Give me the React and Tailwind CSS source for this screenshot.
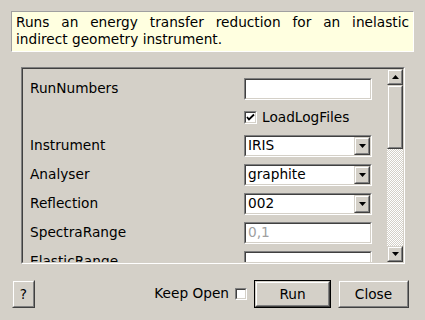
import React from "react";

const Sunken = ({ className = "", inner = "", children }) => (
  <div className={"border border-t-[#808080] border-l-[#808080] border-r-white border-b-white " + className}>
    <div className={"h-full w-full border border-t-[#404040] border-l-[#404040] border-r-[#d4d0c8] border-b-[#d4d0c8] " + inner}>
      {children}
    </div>
  </div>
);

const Raised = ({ className = "", inner = "", children }) => (
  <div className={"border border-t-[#d4d0c8] border-l-[#d4d0c8] border-r-[#404040] border-b-[#404040] " + className}>
    <div className={"h-full w-full border border-t-white border-l-white border-r-[#808080] border-b-[#808080] bg-[#d4d0c8] flex items-center justify-center " + inner}>
      {children}
    </div>
  </div>
);

const Down = () => (
  <svg width="7" height="4" viewBox="0 0 7 4" className="block">
    <polygon points="0,0 7,0 3.5,4" fill="#000" />
  </svg>
);
const Up = () => (
  <svg width="7" height="4" viewBox="0 0 7 4" className="block">
    <polygon points="0,4 7,4 3.5,0" fill="#000" />
  </svg>
);

const Combo = ({ value }) => (
  <Sunken className="w-[128px] h-[22px] shrink-0" inner="bg-white flex items-stretch">
    <div className="flex-1 pl-[2px] flex items-center leading-none">{value}</div>
    <Raised className="w-[16px] h-full">
      <Down />
    </Raised>
  </Sunken>
);

const Row = ({ label, children, h = "h-[22px]" }) => (
  <div className={"flex items-center shrink-0 " + h}>
    <div className="w-[214px] shrink-0 leading-none">{label}</div>
    {children}
  </div>
);

export default function App() {
  return (
    <div className="w-[425px] h-[320px] bg-[#d4d0c8] text-black text-[13.7px] font-['DejaVu_Sans',sans-serif] overflow-hidden flex flex-col">
      <div className="shrink-0 mt-[11px] ml-[11px] w-[403px] h-[41px] bg-[#ffffe0] border border-t-[#a0a0a0] border-l-[#a0a0a0] border-r-white border-b-white px-[4px] pt-[2px] leading-[17px]">
        <div className="text-justify [text-align-last:justify] whitespace-nowrap">Runs an energy transfer reduction for an inelastic</div>
        <div>indirect geometry instrument.</div>
      </div>

      <Sunken className="shrink-0 mt-[15px] ml-[21px] w-[384px] h-[197px]" inner="flex">
        <div className="flex-1 overflow-hidden pl-[7px] pt-[9px] flex flex-col gap-[7px]">
          <Row label="RunNumbers">
            <Sunken className="w-[128px] h-[22px] shrink-0" inner="bg-white" />
          </Row>
          <Row label="" h="h-[21px]">
            <div className="flex items-center gap-[5px]">
              <Sunken className="w-[13px] h-[13px] shrink-0" inner="bg-white flex items-center justify-center">
                <svg width="9" height="9" viewBox="0 0 9 9" className="block">
                  <polyline points="1,4 3,6.5 8,1.5" fill="none" stroke="#000" strokeWidth="1.8" />
                </svg>
              </Sunken>
              <span className="leading-none">LoadLogFiles</span>
            </div>
          </Row>
          <Row label="Instrument">
            <Combo value="IRIS" />
          </Row>
          <Row label="Analyser">
            <Combo value="graphite" />
          </Row>
          <Row label="Reflection">
            <Combo value="002" />
          </Row>
          <Row label="SpectraRange">
            <Sunken className="w-[128px] h-[22px] shrink-0" inner="bg-white flex items-center pl-[2px] text-[#a0a0a0] leading-none">
              0,1
            </Sunken>
          </Row>
          <Row label="ElasticRange">
            <Sunken className="w-[128px] h-[22px] shrink-0" inner="bg-white" />
          </Row>
        </div>
        <div className="w-[16px] shrink-0 flex flex-col">
          <Raised className="h-[16px] w-[16px] shrink-0">
            <Up />
          </Raised>
          <Raised className="h-[64px] w-[16px] shrink-0" />
          <div className="flex-1 bg-[repeating-conic-gradient(#d4d0c8_0%_25%,#ffffff_0%_50%)] bg-[length:2px_2px]" />
          <Raised className="h-[16px] w-[16px] shrink-0">
            <Down />
          </Raised>
        </div>
      </Sunken>

      <div className="shrink-0 mt-[16px] h-[28px] pl-[12px] pr-[16px] flex items-center">
        <Raised className="w-[23px] h-[28px]">?</Raised>
        <div className="flex-1" />
        <span className="leading-none">Keep Open</span>
        <Sunken className="ml-[6px] w-[12px] h-[12px]" inner="bg-white" />
        <div className="ml-[7px] w-[77px] h-[28px] border border-black">
          <Raised className="w-full h-full">Run</Raised>
        </div>
        <Raised className="ml-[7px] w-[71px] h-[28px]">Close</Raised>
      </div>
    </div>
  );
}
